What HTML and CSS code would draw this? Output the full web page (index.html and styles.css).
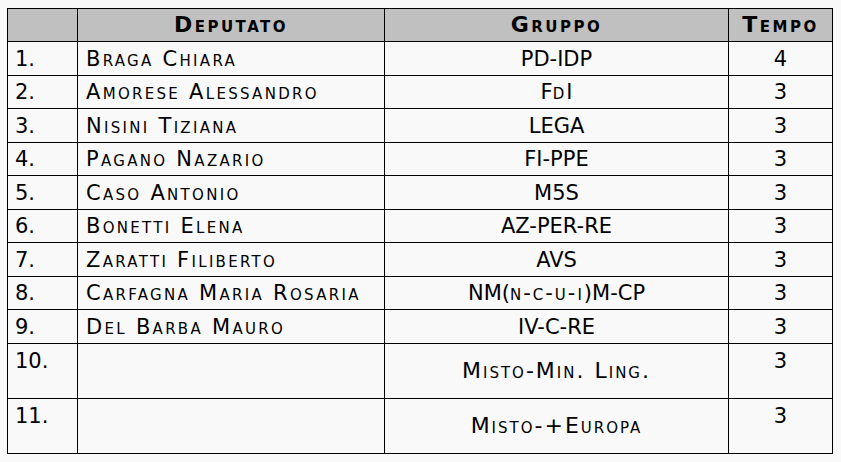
FILE: index.html
```html
<!DOCTYPE html>
<html lang="it">
<head>
<meta charset="utf-8">
<title>Tempi</title>
<link rel="stylesheet" href="styles.css">
</head>
<body>
<div class="page">
<table class="tbl">
  <colgroup>
    <col class="c-num">
    <col class="c-dep">
    <col class="c-grp">
    <col class="c-tmp">
  </colgroup>
  <thead>
    <tr class="h-row">
      <th></th>
      <th class="hd">Deputato</th>
      <th class="hd">Gruppo</th>
      <th class="hd">Tempo</th>
    </tr>
  </thead>
  <tbody>
    <tr class="r-a"><td>1.</td><td class="name">Braga Chiara</td><td class="grp">PD-IDP</td><td class="tmp">4</td></tr>
    <tr class="r-b"><td>2.</td><td class="name">Amorese Alessandro</td><td class="grp">F<span class="sc">d</span>I</td><td class="tmp">3</td></tr>
    <tr class="r-a"><td>3.</td><td class="name">Nisini Tiziana</td><td class="grp">LEGA</td><td class="tmp">3</td></tr>
    <tr class="r-b"><td>4.</td><td class="name">Pagano Nazario</td><td class="grp">FI-PPE</td><td class="tmp">3</td></tr>
    <tr class="r-a"><td>5.</td><td class="name">Caso Antonio</td><td class="grp">M5S</td><td class="tmp">3</td></tr>
    <tr class="r-b"><td>6.</td><td class="name">Bonetti Elena</td><td class="grp">AZ-PER-RE</td><td class="tmp">3</td></tr>
    <tr class="r-a"><td>7.</td><td class="name">Zaratti Filiberto</td><td class="grp">AVS</td><td class="tmp">3</td></tr>
    <tr class="r-b"><td>8.</td><td class="name">Carfagna Maria Rosaria</td><td class="grp">NM(<span class="sc">n-c-u-i</span>)M-CP</td><td class="tmp">3</td></tr>
    <tr class="r-a"><td>9.</td><td class="name">Del Barba Mauro</td><td class="grp">IV-C-RE</td><td class="tmp">3</td></tr>
    <tr class="r-tall"><td class="top">10.</td><td class="top"></td><td class="grp misto">Misto-Min. Ling.</td><td class="tmp top">3</td></tr>
    <tr class="r-tall"><td class="top">11.</td><td class="top"></td><td class="grp misto">Misto-+Europa</td><td class="tmp top">3</td></tr>
  </tbody>
</table>
</div>
</body>
</html>
```

FILE: styles.css
```css
html, body {
  margin: 0;
  padding: 0;
  background: #f9f9f9;
}

.page {
  padding: 8px 0 0 7px;
}

.tbl {
  border-collapse: collapse;
  table-layout: fixed;
  width: 826px;
  font-family: "DejaVu Sans", Verdana, sans-serif;
  font-size: 21px;
  color: #000;
}

.c-num { width: 70px; }
.c-dep { width: 307px; }
.c-grp { width: 344px; }
.c-tmp { width: 104px; }

.tbl th,
.tbl td {
  border: 1px solid #000;
  padding: 0 7px;
  line-height: 24px;
  vertical-align: middle;
  white-space: nowrap;
}

.tbl th {
  background: #c0c0c0;
  font-weight: bold;
  text-align: center;
}

.hd {
  font-variant: small-caps;
  font-size: 22px;
  letter-spacing: 2.5px;
}

.sc {
  font-variant: small-caps;
  letter-spacing: 2px;
}

.h-row { height: 33px; }
.r-a { height: 34px; }
.r-b { height: 33px; }
.r-tall { height: 55px; }

.name {
  font-variant: small-caps;
  letter-spacing: 2.3px;
  padding-left: 8px;
}

.tbl td.name {
  padding-left: 8px;
}

.grp,
.tmp {
  text-align: center;
}

.misto {
  font-variant: small-caps;
  font-size: 22px;
  letter-spacing: 2px;
}

.tbl td.top {
  vertical-align: top;
  padding-top: 5px;
}
```
